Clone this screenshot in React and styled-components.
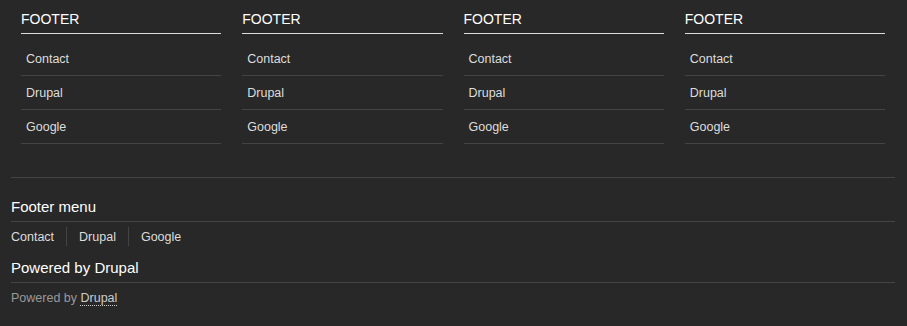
import React from "react";
import styled, { createGlobalStyle } from "styled-components";

const GlobalStyle = createGlobalStyle`
  html, body {
    margin: 0;
    padding: 0;
    background-color: #282828;
  }
  body {
    font-family: "Liberation Sans", Arial, Helvetica, sans-serif;
    color: #ddd;
    height: 326px;
  }
`;

const Footer = styled.footer`
  padding: 0 12px 0 11px;
`;

const Columns = styled.div`
  display: grid;
  grid-template-columns: repeat(4, 1fr);
  column-gap: 21px;
  padding: 9px 10px 33px;
  border-bottom: 1px solid #444;
`;

const Column = styled.div`
  display: flex;
  flex-direction: column;
`;

const ColumnTitle = styled.h2`
  margin: 0;
  padding-bottom: 4px;
  font-size: 14px;
  line-height: 20px;
  font-weight: normal;
  color: #fff;
  border-bottom: 1px solid #ddd;
`;

const LinkList = styled.ul`
  list-style: none;
  margin: 8px 0 0;
  padding: 0;
`;

const LinkItem = styled.li`
  border-bottom: 1px solid #444;
`;

const ColumnLink = styled.a`
  display: block;
  padding: 9px 5px 8px;
  font-size: 12.5px;
  line-height: 16px;
  color: #ddd;
  text-decoration: none;
`;

const Block = styled.section`
  display: flex;
  flex-direction: column;
`;

const BlockTitle = styled.h2`
  margin: ${(p) => p.$top}px 0 0;
  padding-bottom: 4px;
  font-size: 15px;
  line-height: 20px;
  font-weight: normal;
  color: #fff;
  border-bottom: 1px solid #444;
`;

const Menu = styled.ul`
  display: flex;
  list-style: none;
  margin: 5px 0 0;
  padding: 0;
`;

const MenuItem = styled.li`
  padding: 0 12px;
  border-left: 1px solid #444;
  line-height: 18px;

  &:first-child {
    padding-left: 0;
    border-left: none;
  }
`;

const MenuLink = styled.a`
  font-size: 12.5px;
  color: #ddd;
  text-decoration: none;
`;

const Credit = styled.p`
  margin: 7px 0 0;
  font-size: 12.5px;
  line-height: 16px;
  color: #999;
`;

const CreditLink = styled.a`
  color: #ccc;
  text-decoration: none;
  border-bottom: 1px dotted #ccc;
`;

const links = ["Contact", "Drupal", "Google"];

export default function App() {
  return (
    <>
      <GlobalStyle />
      <Footer>
        <Columns>
          {[0, 1, 2, 3].map((i) => (
            <Column key={i}>
              <ColumnTitle>FOOTER</ColumnTitle>
              <LinkList>
                {links.map((l) => (
                  <LinkItem key={l}>
                    <ColumnLink href="#">{l}</ColumnLink>
                  </LinkItem>
                ))}
              </LinkList>
            </Column>
          ))}
        </Columns>

        <Block>
          <BlockTitle $top={19}>Footer menu</BlockTitle>
          <Menu>
            {links.map((l) => (
              <MenuItem key={l}>
                <MenuLink href="#">{l}</MenuLink>
              </MenuItem>
            ))}
          </Menu>
        </Block>

        <Block>
          <BlockTitle $top={12}>Powered by Drupal</BlockTitle>
          <Credit>
            Powered by <CreditLink href="#">Drupal</CreditLink>
          </Credit>
        </Block>
      </Footer>
    </>
  );
}
